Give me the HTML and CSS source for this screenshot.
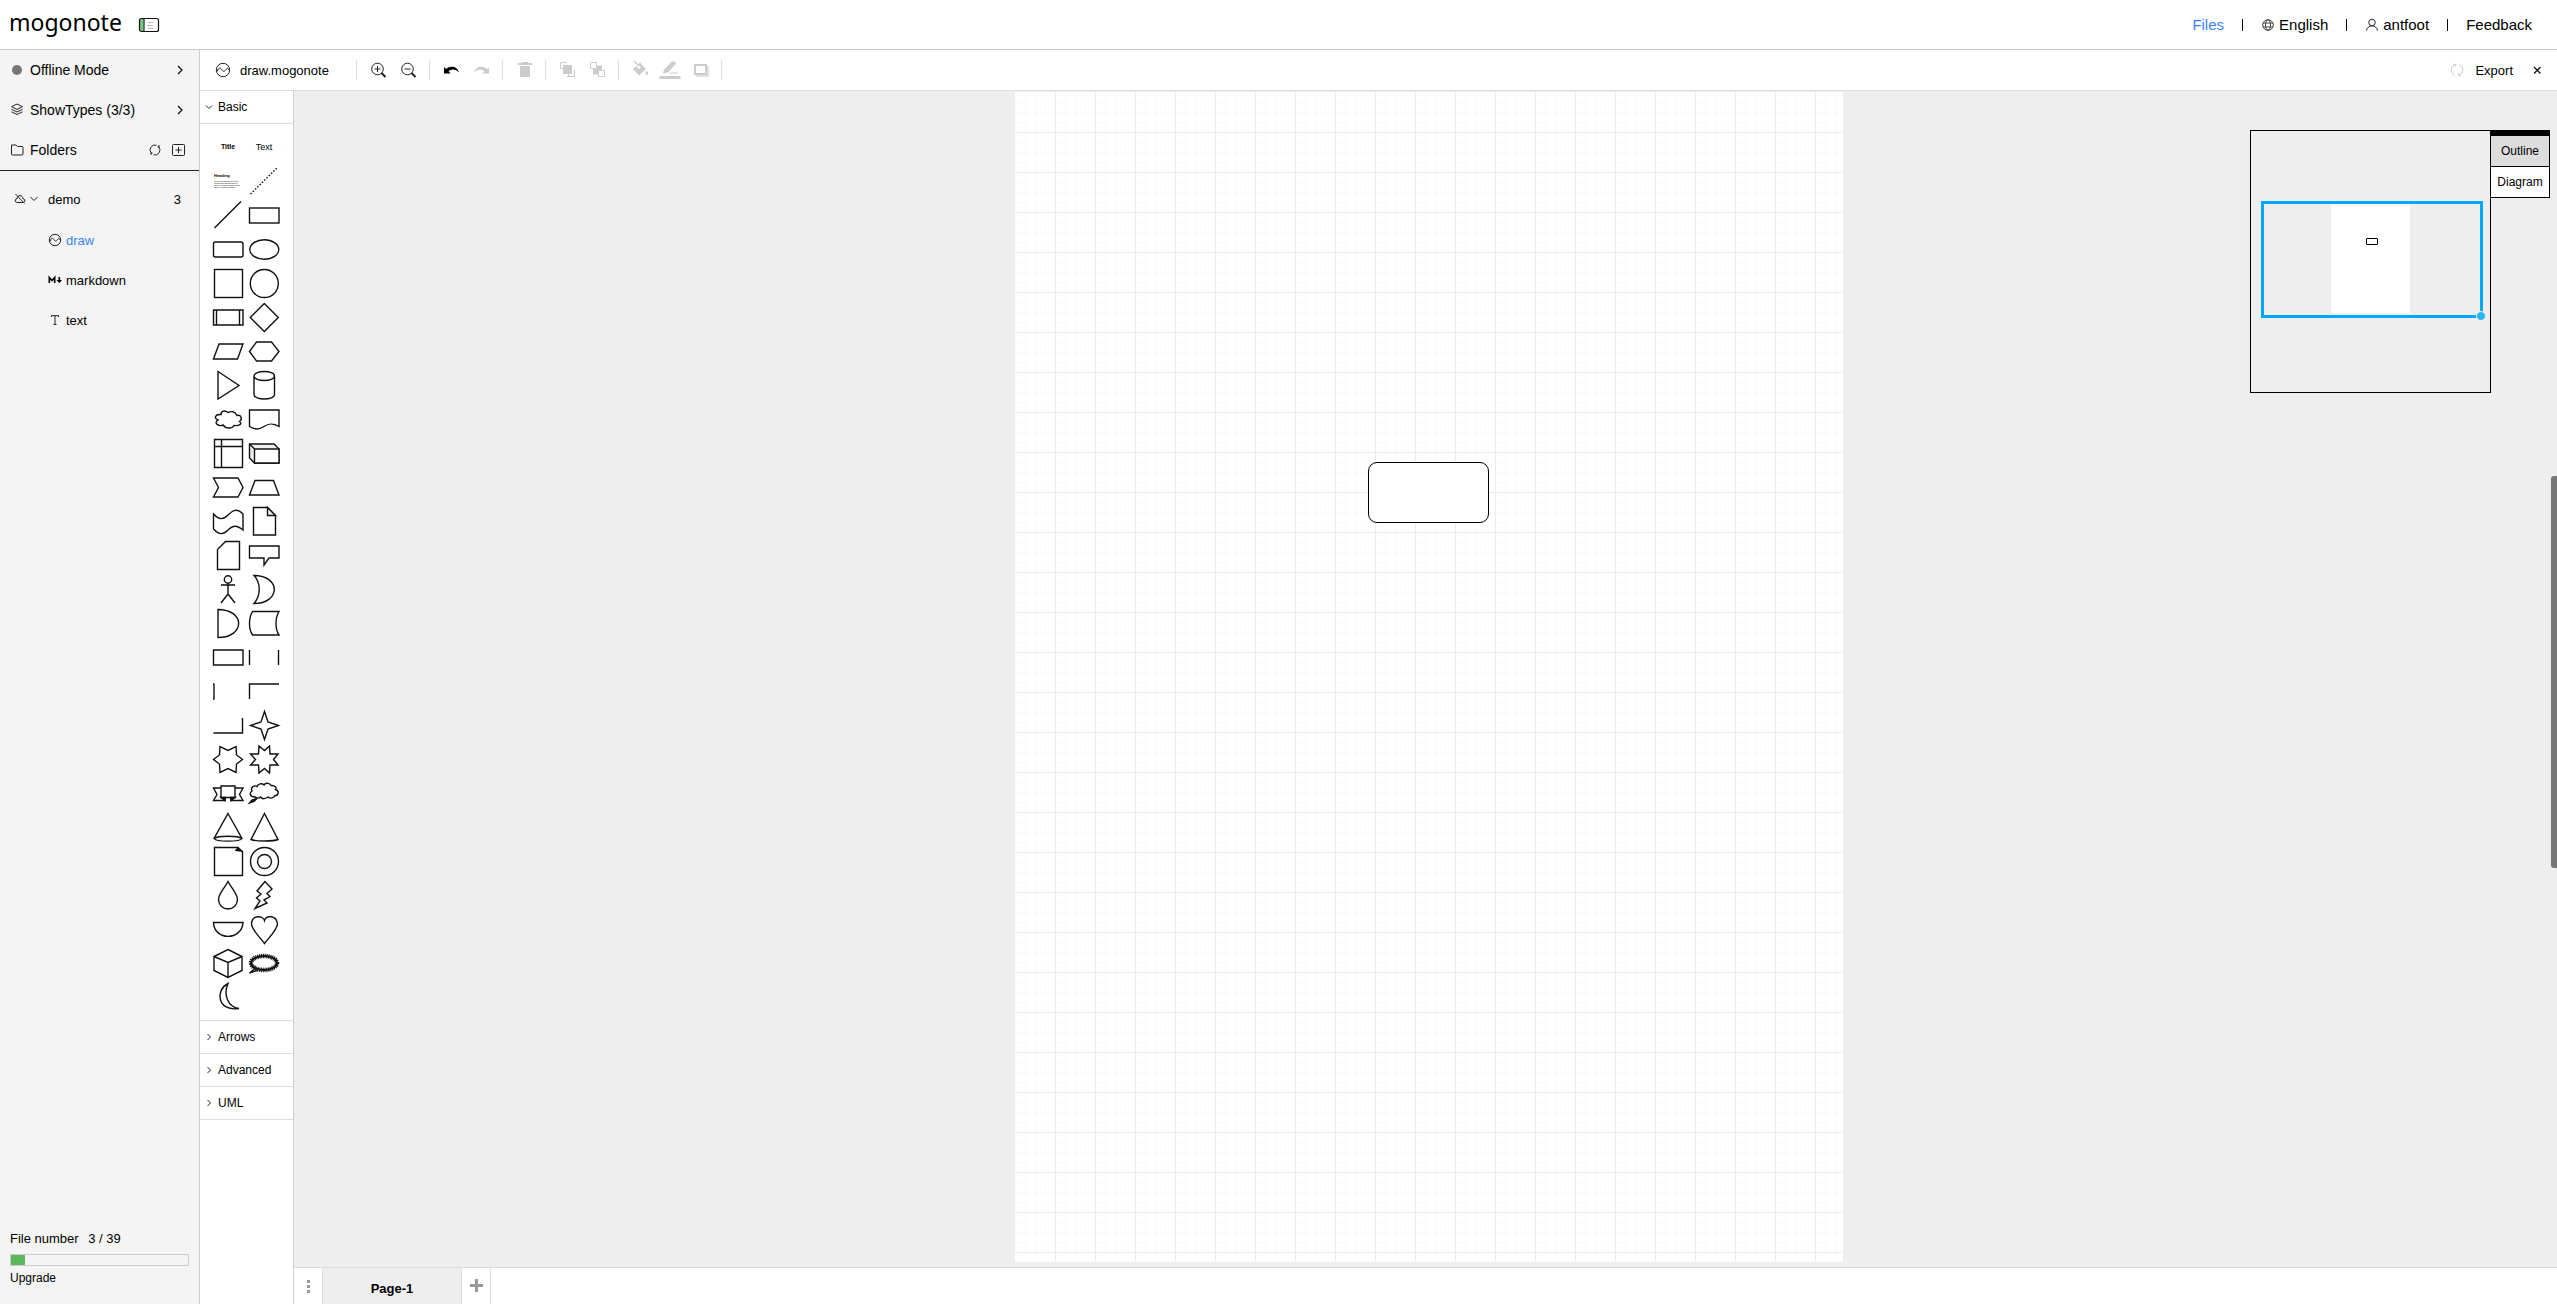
FILE: index.html
```html
<!DOCTYPE html>
<html lang="en">
<head>
<meta charset="utf-8">
<title>mogonote</title>
<link rel="stylesheet" href="styles.css">
</head>
<body>
<header class="topbar">
  <a class="logo" href="#">mogonote</a>
  <button class="icon-btn" type="button" aria-label="Toggle sidebar">
    <svg width="22" height="16" viewBox="0 0 22 16"><path d="M2 2h4.500v12h-4.500z" fill="#7cc47f"/><path d="M6 1.500v13" stroke="#222"/><rect x="1.500" y="1.500" width="19" height="13" rx="2" fill="none" stroke="#111" stroke-width="1.200"/><path d="M10 5.500h5M9 8.500h6M10 11.500h5" stroke="#bbb"/></svg>
  </button>
  <nav class="topnav">
    <a class="active" href="#">Files</a>
    <a href="#"><svg width="14" height="14" viewBox="-7 -7 14 14" class="line thin"><circle r="5.300"/><ellipse rx="2.500" ry="5.300"/><path d="M-5 -2h10M-5 2h10"/></svg>English</a>
    <a href="#"><svg width="14" height="14" viewBox="-7 -7 14 14" class="line"><circle cy="-2.500" r="3.300"/><path d="M-5.500 5.500C-4.500 -.700 4.500 -.700 5.500 5.500"/></svg>antfoot</a>
    <a href="#">Feedback</a>
  </nav>
</header>
<div class="workspace">
  <aside class="sidebar">
    <div class="settings">
      <button class="side-row" type="button">
        <svg width="14" height="14" viewBox="-7 -7 14 14"><circle r="5" fill="#777"/></svg><span>Offline Mode</span>
        <svg class="line bold" width="10" height="12" viewBox="0 0 10 12"><path d="M3 2l4 4-4 4"/></svg>
      </button>
      <button class="side-row" type="button">
        <svg width="14" height="14" viewBox="-7 -7 14 14" class="line"><path d="M0 -6L5.500 -3.300L0 -.600L-5.500 -3.300ZM-5.500 -.700L0 2L5.500 -.700M-5.500 1.800L0 4.500L5.500 1.800"/></svg><span>ShowTypes (3/3)</span>
        <svg class="line bold" width="10" height="12" viewBox="0 0 10 12"><path d="M3 2l4 4-4 4"/></svg>
      </button>
      <div class="side-row">
        <svg width="14" height="14" viewBox="-7 -7 14 14" class="line"><path d="M-5.500 -5H-1L.500 -3.500H5Q6 -3.500 6 -2.500V4Q6 5 5 5H-4.500Q-5.500 5 -5.500 4Z"/></svg><span>Folders</span>
        <button class="icon-btn" type="button" aria-label="Refresh"><svg width="14" height="14" viewBox="-7 -7 14 14" class="line"><path d="M-3.700 3.300A5 5 0 0 1 1.500 -4.800M3.700 -3.300A5 5 0 0 1 -1.500 4.800"/><path d="M-5 4h1.800v-1.800M5 -4h-1.800v1.800"/></svg></button>
        <button class="icon-btn" type="button" aria-label="New folder"><svg width="14" height="14" viewBox="0 0 14 14" class="line"><rect x="1.500" y="1.500" width="12" height="11" rx="1"/><path d="M7.500 4v6M4.500 7h6"/></svg></button>
      </div>
    </div>
    <ul class="tree">
      <li class="folder">
        <svg width="12" height="12" viewBox="-6 -6 12 12" class="line"><path d="M-3 3.500C-6 3 -5 -.500 -3 0C-3 -4.500 3 -4.500 3 0C5 -.500 6 3 3 3.500ZM-4.500 -5L4.500 4.500"/></svg>
        <svg width="10" height="10" viewBox="0 0 10 10" class="line"><path d="M1.500 3L5 6.500L8.500 3"/></svg>
        <span>demo</span><span>3</span>
      </li>
      <li><a class="active" href="#"><svg width="14" height="14" viewBox="-7 -7 14 14" class="line"><circle r="5.700"/><path d="M-5 1.500C-3.500 -3 -2 -2 -.800 0S2 .800 3 -1S4.500 -.500 5.500 .500"/></svg>draw</a></li>
      <li><a href="#"><svg width="14" height="14" viewBox="0 0 14 14"><path d="M1.300 10V4.500L4 7.500L6.700 4.500V10M11.300 4V8" fill="none" stroke="#111" stroke-width="1.700"/><path d="M8.500 7h5.500L11.300 10.300z"/></svg>markdown</a></li>
      <li><a href="#"><svg width="14" height="14" viewBox="0 0 14 14" class="line"><path d="M3.500 4V2.700H10.500V4M7 2.700V11.500M5.500 11.500H8.500"/></svg>text</a></li>
    </ul>
    <div class="quota">
      <label for="quota">File number <span>3 / 39</span></label>
      <progress id="quota" value="3" max="39"></progress>
      <a href="#">Upgrade</a>
    </div>
  </aside>

  <main class="editor">
    <div class="toolbar">
      <div class="doc-name"><svg width="16" height="16" viewBox="-8 -8 16 16" class="line"><circle r="6.700"/><path d="M-6 1.500C-4 -3.500 -2.500 -2.500 -1 0S2 1 3.500 -1S5.500 -.500 6.500 .500"/></svg><span>draw.mogonote</span></div>
      <div class="tools">
        <button type="button" aria-label="Zoom in"><svg width="20" height="20" viewBox="-10 -10 20 20" class="line"><circle cx="-.500" cy="-1" r="5.800"/><path d="M-3.500 -1h6M-.500 -4v6"/><path d="M3.500 3L7.500 7" stroke-width="2"/></svg></button>
        <button type="button" aria-label="Zoom out"><svg width="20" height="20" viewBox="-10 -10 20 20" class="line"><circle cx="-.500" cy="-1" r="5.800"/><path d="M-3.500 -1h6"/><path d="M3.500 3L7.500 7" stroke-width="2"/></svg></button>
      </div>
      <div class="tools">
        <button type="button" aria-label="Undo"><svg width="20" height="20" viewBox="-10 -10 20 20"><path d="M-7 -3V3.500H-.500L-2.500 1C1 -1.500 5 -1 8 2.500C6 -4.500 -1 -4.500 -5 -1Z"/></svg></button>
        <button type="button" aria-label="Redo" disabled><svg width="20" height="20" viewBox="-10 -10 20 20"><path d="M8 -3V3.500H1.500L3.500 1C0 -1.500 -4 -1 -7 2.500C-5 -4.500 2 -4.500 6 -1Z"/></svg></button>
      </div>
      <div class="tools">
        <button type="button" aria-label="Delete" disabled><svg width="20" height="20" viewBox="-10 -10 20 20"><path d="M-6 -7H-2V-8H4V-7H8V-5H-6ZM-4 -4H6V7H-4Z"/></svg></button>
      </div>
      <div class="tools">
        <button type="button" aria-label="To front" disabled><svg width="20" height="20" viewBox="-10 -10 20 20"><path d="M-4 -5H5V4H-4Z"/><path d="M-6.500 -1.500V-7.500H0M0 6.500H7.500V0M-6.500 -1.500H-4M1.500 4V6.500" fill="none" stroke="currentColor"/></svg></button>
        <button type="button" aria-label="To back" disabled><svg width="20" height="20" viewBox="-10 -10 20 20"><path d="M-4 -4.500H5V4.500H-4Z"/><path d="M-6.500 -7.500H-.500V-1.500H-6.500ZM1.500 .500H7.500V6.500H1.500Z" fill="#fff" stroke="currentColor"/></svg></button>
      </div>
      <div class="tools">
        <button type="button" aria-label="Fill colour" disabled><svg width="20" height="20" viewBox="-10 -10 20 20"><path d="M-7 -1L0 -7.500L6 -1L-1 5.500ZM6.500 .500Q10 4.500 7 5Q4 4.500 6.500 .500Z"/><path d="M-6 -8L0 -2" stroke="#fff" stroke-width="2.500"/><path d="M-6 -9L-1 -4" stroke="currentColor" stroke-width="1.300"/></svg></button>
        <button type="button" aria-label="Line colour" disabled><svg width="22" height="20" viewBox="-11 -10 22 20"><path d="M-7 3.500L-6 -.500L2 -8.500Q4 -9.500 6 -6.500L-2 2.500ZM-10.500 6H10.500V9H-10.500ZM0 2.500H8V3.500H-1Z"/></svg></button>
        <button type="button" aria-label="Shadow" disabled><svg width="20" height="20" viewBox="-10 -10 20 20"><path d="M-4 -4H9V7H-4Z" opacity=".6"/><path d="M-5 -5H6V4H-5Z" fill="#fff" stroke="currentColor" stroke-width="2"/></svg></button>
      </div>
      <div class="doc-actions">
        <svg width="14" height="14" viewBox="-7 -7 14 14" class="line faint"><path d="M-2.500 5.200A5.700 5.700 0 0 1 -2.500 -5.200M2.500 -5.200A5.700 5.700 0 0 1 2.500 5.200M-4 -5.800L-1 -5.500L-2 -3M4 5.800L1 5.500L2 3"/></svg>
        <button type="button">Export</button>
        <button type="button" aria-label="Close"><svg width="10" height="10" viewBox="0 0 10 10" class="line bold"><path d="M2 2L8.500 8.500M8.500 2L2 8.500"/></svg></button>
      </div>
    </div>
    <div class="board">
      <aside class="palette">
        <button class="section" type="button"><svg width="8" height="8" viewBox="0 0 8 8" class="line"><path d="M1 2.500L4 5.500L7 2.500"/></svg>Basic</button>
        <div class="shapes">
          <svg viewBox="-18 -17 36 34"><text class="t-title" y="2">Title</text></svg>
          <svg viewBox="-18 -17 36 34"><text class="t-text" y="3">Text</text></svg>
          <svg viewBox="-18 -17 36 34"><text class="t-head" x="-14" y="-4">Heading</text><text class="t-body" x="-14" y="1">Lorem ipsum dolor sit amet,</text><text class="t-body" x="-14" y="3">consectetur adipisicing elit,</text><text class="t-body" x="-14" y="5">sed do eiusmod tempor incid</text><text class="t-body" x="-14" y="7">labore et dolore magna</text></svg>
          <svg viewBox="-18 -17 36 34"><path d="M-13.500 13L13 -13" stroke-dasharray="1.600 1.600"/></svg>
          <svg viewBox="-18 -17 36 34"><path d="M-13.500 13L13 -13.500"/></svg>
          <svg viewBox="-18 -17 36 34"><rect x="-14.500" y="-7" width="29.500" height="15"/></svg>
          <svg viewBox="-18 -17 36 34"><rect x="-14.500" y="-7" width="29.500" height="15" rx="2"/></svg>
          <svg viewBox="-18 -17 36 34"><ellipse cx=".300" cy=".500" rx="14.500" ry="9.800"/></svg>
          <svg viewBox="-18 -17 36 34"><rect x="-13.500" y="-13.500" width="28" height="28"/></svg>
          <svg viewBox="-18 -17 36 34"><circle cx=".300" cy=".500" r="14"/></svg>
          <svg viewBox="-18 -17 36 34"><path d="M-14.500 -7H15V8H-14.500ZM-11.500 -7V8M11.500 -7V8"/></svg>
          <svg viewBox="-18 -17 36 34"><path d="M.300 -13.500L14.300 .500L.300 14.500L-13.700 .500Z"/></svg>
          <svg viewBox="-18 -17 36 34"><path d="M-14.500 8L-9 -7H15L9.500 8Z"/></svg>
          <svg viewBox="-18 -17 36 34"><path d="M-14.500 .500L-7.500 -9H7.500L15 .500L7.500 10H-7.500Z"/></svg>
          <svg viewBox="-18 -17 36 34"><path d="M-10 -13.500L11 .500L-10 14Z"/></svg>
          <svg viewBox="-18 -17 36 34"><path d="M-10 -9C-10 -15 10.500 -15 10.500 -9V9.500C10.500 15.500 -10 15.500 -10 9.500ZM-10 -9C-10 -3 10.500 -3 10.500 -9"/></svg>
          <svg viewBox="-18 -17 36 34"><path d="M-7 -4.500C-13 -5 -14.500 -.500 -10 1C-15 4 -9 8 -5 6C-2 10 4 10 6 6.500C11 7 15 5 11.500 2.500C15 0 13 -4.500 9 -3.500C7 -8 3 -8 0 -6.500C-3 -9 -7 -8.500 -7 -4.500Z"/></svg>
          <svg viewBox="-18 -17 36 34"><path d="M-14.500 -9H15V7.500C9 4 5 4 0 7.500S-10 10.500 -14.500 7.500Z"/></svg>
          <svg viewBox="-18 -17 36 34"><path d="M-13.500 -13.500H14.500V14.500H-13.500ZM-6.500 -13.500V14.500M-13.500 -6.500H14.500"/></svg>
          <svg viewBox="-18 -17 36 34"><path d="M-14.500 -9H10L15 -4V10H-9.500L-14.500 5Z" fill="#eee"/><path d="M-9.500 -4H15V10H-9.500ZM-14.500 -9L-9.500 -4" fill="#fff"/></svg>
          <svg viewBox="-18 -17 36 34"><path d="M-14.500 -9H10L15 .500L10 10H-14.500L-9.500 .500Z"/></svg>
          <svg viewBox="-18 -17 36 34"><path d="M-14.500 8L-9 -6.500H9.500L15 8Z"/></svg>
          <svg viewBox="-18 -17 36 34"><path d="M-14.500 -7C-9 -1 -5 -1 0 -6S9 -13 15 -7V9C9 4 5 4 0 9S-9 14 -14.500 8Z"/></svg>
          <svg viewBox="-18 -17 36 34"><path d="M-10.500 -13.500H3.500L11.500 -5.500V14H-10.500Z"/><path d="M3.500 -13.500V-5.500H11.500Z" fill="#eee"/></svg>
          <svg viewBox="-18 -17 36 34"><path d="M-2.500 -13.500H11.500V14.500H-10.500V-5.500Z"/></svg>
          <svg viewBox="-18 -17 36 34"><path d="M-14.500 -9H15V3H5L0 10V3H-14.500Z"/></svg>
          <svg viewBox="-18 -17 36 34"><circle cy="-9.500" r="3.700"/><path d="M0 -6V5M-7 -4H7M-7 14L0 5L7 14"/></svg>
          <svg viewBox="-18 -17 36 34"><path d="M-10 -13.500C17 -13.500 17 14.500 -10 14.500C-3 6 -3 -6 -10 -13.500Z"/></svg>
          <svg viewBox="-18 -17 36 34"><path d="M-10 -13.500C17.500 -13.500 17.500 14.500 -10 14.500Z"/></svg>
          <svg viewBox="-18 -17 36 34"><path d="M-11.500 -11.500H15C11 -5 11 6 15 12H-11.500C-15.500 6 -15.500 -5 -11.500 -11.500Z"/></svg>
          <svg viewBox="-18 -17 36 34"><path d="M-14.500 -7H15V8H-14.500Z"/></svg>
          <svg viewBox="-18 -17 36 34"><path d="M-14.500 -7V8M14.500 -7V8"/></svg>
          <svg viewBox="-18 -17 36 34"><path d="M-14 -7V8M-15 -7H-13.500M-15 8H-13.500"/></svg>
          <svg viewBox="-18 -17 36 34"><path d="M15 -7H-14.500V8"/></svg>
          <svg viewBox="-18 -17 36 34"><path d="M14.500 -7V8H-14.500"/></svg>
          <svg viewBox="-18 -17 36 34"><path d="M.500 -13.500L4 -3L14.500 .500L4 4L.500 14.500L-3 4L-13.500 .500L-3 -3Z"/></svg>
          <svg viewBox="-18 -17 36 34"><path d="M14.500 .500L8.500 5L8 13.500L0 9.500L-8 13.500L-8.500 5L-14.500 .500L-8.500 -4L-8 -12.500L0 -8.500L8 -12.500L8.500 -4Z"/></svg>
          <svg viewBox="-18 -17 36 34"><path d="M5.500 -13L6 -5H14L9.500 .500L14 6H6L5.500 14L.500 9.500L-5 14L-5.500 6H-13.500L-8.500 .500L-13.500 -5H-5.500L-5 -13L.500 -8.500Z"/></svg>
          <svg viewBox="-18 -17 36 34"><path d="M-7 -5H-14.500L-11 1.500L-14.500 7.500H-3V4M7 -5H15L11.500 1.500L15 7.500H3V4"/><path d="M-7 -7H7V4.500H-7Z"/><path d="M-7 4.500H-3V7.500ZM7 4.500H3V7.500Z" fill="#222"/></svg>
          <svg viewBox="-18 -17 36 34"><path d="M-9 4C-14 4 -15 0 -12 -2C-14 -6 -9 -8 -7 -6.500C-6 -9.500 -2 -10 0 -8C2 -11 6 -9.500 7 -7.500C11 -8 13 -5 11.500 -3.500C16 -2 14 3 11 2.500C10 5 6 6 4 4C1 6 -2 6 -3.500 4C-5 5.500 -8 5.500 -9 4Z"/><path d="M-14.500 10L-12 7L-7 5.500L-10 8.500Z" fill="#222"/></svg>
          <svg viewBox="-18 -17 36 34"><path d="M0 -13.500L14 11.500C12 15 -12 15 -14 11.500Z"/><path d="M-14 11.500C-10 8.500 10 8.500 14 11.500"/></svg>
          <svg viewBox="-18 -17 36 34"><path d="M.500 -13.500L14 12.500C10 14.500 -9 14.500 -13 12.500Z"/></svg>
          <svg viewBox="-18 -17 36 34"><path d="M-13.500 -13.500H10L14.500 -9.500V14.500H-13.500Z"/><path d="M9.500 -12.500L8 -10.500L13 -10Z" fill="#222"/></svg>
          <svg viewBox="-18 -17 36 34"><circle cx=".500" cy=".500" r="14"/><circle cx=".500" cy=".500" r="7"/></svg>
          <svg viewBox="-18 -17 36 34"><path d="M0 -13.500C4 -6 9.500 -1 9.500 4.500A9.500 9.500 0 0 1 -9.500 4.500C-9.500 -1 -4 -6 0 -13.500Z"/></svg>
          <svg viewBox="-18 -17 36 34"><path d="M1 -13.500L-7 -4L-3 -1L-7.500 3L-4 6L-9 13.500L3 8L0 5L6 1.500L3 -1.500L8 -6Z"/></svg>
          <svg viewBox="-18 -17 36 34"><path d="M-14.500 -6.500H15C14 12 -14 12 -14.500 -6.500Z"/></svg>
          <svg viewBox="-18 -17 36 34"><path d="M.500 -8.500C2 -13.500 12 -14.500 13.500 -5.500C13.500 1 4 9.500 .500 14.500C-3 9.500 -12.500 1 -12.500 -5.500C-11.500 -14.500 -1 -13.500 .500 -8.500Z"/></svg>
          <svg viewBox="-18 -17 36 34"><path d="M0 -13.500L14 -6.500V7.500L0 14.500L-14 7.500V-6.500ZM-14 -6.500L0 -.500L14 -6.500M0 -.500V14.500"/></svg>
          <svg viewBox="-18 -17 36 34"><ellipse rx="13" ry="7" stroke-width="2"/><ellipse rx="13" ry="7" stroke-width="4.500" stroke-dasharray="1 .8"/><path d="M-9 5.500L-14.500 10L-7 7.500"/></svg>
          <svg viewBox="-18 -17 36 34"><path d="M0 -13.500C-13 -7 -11 15 11 11.500C0 10 -5 -2 0 -13.500Z"/></svg>
        </div>
        <button class="section" type="button"><svg width="8" height="8" viewBox="0 0 8 8" class="line"><path d="M2.500 1L5.500 4L2.500 7"/></svg>Arrows</button>
        <button class="section" type="button"><svg width="8" height="8" viewBox="0 0 8 8" class="line"><path d="M2.500 1L5.500 4L2.500 7"/></svg>Advanced</button>
        <button class="section" type="button"><svg width="8" height="8" viewBox="0 0 8 8" class="line"><path d="M2.500 1L5.500 4L2.500 7"/></svg>UML</button>
      </aside>
      <div class="stage">
        <div class="canvas">
          <div class="page"><div class="node"></div></div>
          <div class="inspector">
            <div class="outline"><div class="mini-page"></div><div class="mini-node"></div><div class="mini-view"></div><div class="mini-handle"></div></div>
            <div class="tabs"><button class="current" type="button">Outline</button><button type="button">Diagram</button></div>
          </div>
          <div class="scroll-thumb"></div>
        </div>
        <footer class="pages">
          <button type="button" aria-label="Pages"><svg width="4" height="14" viewBox="0 0 4 14" fill="#999"><path d="M1 1h3v3h-3zM1 6h3v3h-3zM1 11h3v3h-3z"/></svg></button>
          <button class="current" type="button">Page-1</button>
          <button type="button" aria-label="Add page"><svg width="14" height="14" viewBox="0 0 14 14" fill="#999"><path d="M6 0h3v5h5v3h-5v5h-3v-5h-5v-3h5z"/></svg></button>
        </footer>
      </div>
    </div>
  </main>
</div>
</body>
</html>
```
FILE: styles.css
```css
* { box-sizing: border-box; }

body {
  margin: 0;
  min-height: 100vh;
  display: flex;
  flex-direction: column;
  font-family: "Liberation Sans", Arial, sans-serif;
  font-size: 13px;
  color: #000;
  background: #fff;
}

a { color: inherit; text-decoration: none; }

button {
  margin: 0;
  padding: 0;
  border: 0;
  background: none;
  font: inherit;
  color: inherit;
  cursor: pointer;
}

svg { display: block; flex: none; }

.line { fill: none; stroke: #222; stroke-width: 1; }
.thin { stroke: #444; }
.bold { stroke: #111; stroke-width: 1.3; }
.faint { stroke: #ccc; }
.active { color: #3b82f6; }

/* Header */
.topbar {
  height: 50px;
  display: flex;
  align-items: center;
  border-bottom: 1px solid #ccc;
  padding: 0 25px 0 9px;
}

.logo {
  width: 129px;
  padding-bottom: 6px;
  font: 23px/40px "Noto Sans", sans-serif;
}

.topnav {
  margin-left: auto;
  display: flex;
  align-items: center;
  font-size: 15px;
}

.topnav a { display: flex; align-items: center; gap: 4px; }

.topnav a + a::before {
  content: "";
  width: 1px;
  height: 12px;
  margin: 0 14px 0 18px;
  background: #000;
}

.workspace { flex: 1; display: flex; }

/* Folder sidebar */
.sidebar {
  width: 200px;
  flex: none;
  display: flex;
  flex-direction: column;
  border-right: 1px solid #ccc;
  background: #f4f4f4;
}

.settings { border-bottom: 1px solid #222; }

.side-row {
  width: 100%;
  height: 40px;
  display: flex;
  align-items: center;
  gap: 6px;
  padding: 0 14px 0 10px;
  font-size: 14px;
  text-align: left;
}

.side-row span { flex: 1; }
.side-row .icon-btn + .icon-btn { margin-left: 3px; }

.tree { flex: 1; margin: 0; padding: 8px 18px 0 14px; list-style: none; }
.tree li { height: 40px; display: flex; align-items: center; }
.tree .folder { margin-bottom: 1px; }
.tree li a { display: flex; align-items: center; gap: 4px; padding-left: 34px; }
.folder svg + svg { margin: 0 9px 0 3px; }
.folder span:last-child { margin-left: auto; }

.quota {
  display: flex;
  flex-direction: column;
  padding: 0 10px 18px;
}

.quota label { line-height: 16px; }
.quota label span { margin-left: 6px; }
.quota a { font-size: 12px; line-height: 16px; }

.quota progress {
  appearance: none;
  width: 100%;
  height: 12px;
  margin: 7px 0 4px;
  border: 1px solid #ccc;
}

.quota progress::-webkit-progress-bar { background: #f4f4f4; }
.quota progress::-webkit-progress-value { background: #5cb85c; }

/* Editor toolbar */
.editor { flex: 1; min-width: 0; display: flex; flex-direction: column; }

.toolbar {
  height: 41px;
  display: flex;
  align-items: center;
  border-bottom: 1px solid #ddd;
}

.doc-name {
  width: 157px;
  display: flex;
  align-items: center;
  gap: 9px;
  padding-left: 15px;
}

.doc-name, .tools { height: 20px; border-right: 1px solid #ddd; }
.tools { display: flex; padding: 0 6px; }

.tools button {
  width: 30px;
  height: 20px;
  display: flex;
  align-items: center;
  justify-content: center;
}

.tools button svg { fill: currentColor; }
.tools button svg.line { fill: none; }
.tools button:disabled { color: #ccc; }

.doc-actions {
  margin-left: auto;
  display: flex;
  align-items: center;
  gap: 11px;
  padding-right: 15px;
}

.doc-actions button + button { margin-left: 8px; }

.board { flex: 1; display: flex; }

/* Shape palette */
.palette {
  width: 94px;
  flex: none;
  border-right: 1px solid #ccc;
}

.section {
  width: 100%;
  height: 33px;
  display: flex;
  align-items: center;
  gap: 5px;
  padding-left: 5px;
  border-bottom: 1px solid #ddd;
  font-size: 12px;
}

.shapes {
  display: grid;
  grid-template-columns: 36px 36px;
  grid-auto-rows: 34px;
  padding: 6px 10px;
  border-bottom: 1px solid #ddd;
}

.shapes svg { fill: none; stroke: #111; stroke-width: 1.4; }

.shapes text {
  stroke: none;
  fill: #000;
  text-anchor: middle;
}

.shapes .t-title { font-size: 7px; font-weight: bold; }
.shapes .t-text { font-size: 9px; }
.shapes .t-head { font-size: 4px; font-weight: bold; text-anchor: start; }
.shapes .t-body { font-size: 2px; text-anchor: start; }

/* Drawing canvas */
.stage { flex: 1; min-width: 0; display: flex; flex-direction: column; }

.canvas {
  position: relative;
  flex: 1;
  overflow: hidden;
  background: #eee;
}

.page {
  position: absolute;
  left: 721px;
  top: 1px;
  width: 828px;
  height: 1170px;
  border: 1px solid #fff;
  background-color: #fff;
  background-image:
    linear-gradient(90deg, #ebebeb 1px, transparent 1px),
    linear-gradient(#ebebeb 1px, transparent 1px),
    linear-gradient(90deg, #fafafa 1px, transparent 1px),
    linear-gradient(#fafafa 1px, transparent 1px);
  background-size: 40px 40px, 40px 40px, 10px 10px, 10px 10px;
  background-origin: border-box;
  background-clip: padding-box;
}

.node {
  position: absolute;
  left: 352px;
  top: 369px;
  width: 121px;
  height: 61px;
  border: 1px solid #000;
  border-radius: 9px;
  background: #fff;
}

.inspector {
  position: absolute;
  top: 39px;
  right: 7px;
  display: flex;
  align-items: flex-start;
}

.outline {
  position: relative;
  width: 241px;
  height: 263px;
  margin-right: -1px;
  border: 1px solid #000;
}

.mini-page, .mini-node, .mini-view, .mini-handle { position: absolute; }
.mini-page { left: 80px; top: 72px; width: 79px; height: 110px; background: #fff; }
.mini-node { left: 115px; top: 107px; width: 12px; height: 7px; border: 1px solid #000; border-radius: 1px; }
.mini-view { left: 10px; top: 70px; width: 222px; height: 117px; border: 3px solid #00a8ff; }
.mini-handle { left: 225px; top: 180px; width: 10px; height: 10px; border: 1px solid #eee; border-radius: 50%; background: #29b6f2; }

.tabs {
  width: 60px;
  display: flex;
  flex-direction: column;
  border: 1px solid #000;
  border-width: 6px 1px 0;
  font-size: 12px;
}

.tabs button { height: 31px; border-bottom: 1px solid #000; background: #fff; }
.tabs .current { background: #ddd; }

.scroll-thumb {
  position: absolute;
  right: 0;
  top: 385px;
  width: 6px;
  height: 392px;
  border-radius: 3px 0 0 3px;
  background: #777;
}

/* Page tabs */
.pages { height: 37px; display: flex; border-top: 1px solid #ddd; }

.pages button {
  width: 29px;
  display: flex;
  align-items: center;
  justify-content: center;
  border-right: 1px solid #ddd;
}

.pages .current {
  width: 139px;
  padding-top: 5px;
  background: #eee;
  font-weight: bold;
}
```
